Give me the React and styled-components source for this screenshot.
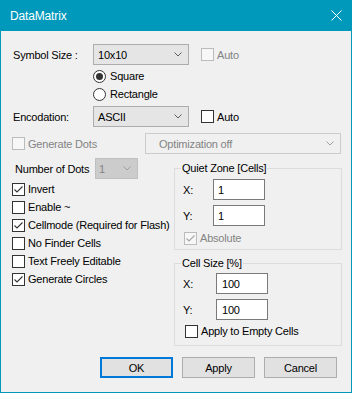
import React from 'react'
import styled, { createGlobalStyle } from 'styled-components'

const accent = '#0099bc'

const GlobalStyle = createGlobalStyle`
  html, body {
    margin: 0;
    padding: 0;
    background: #fff;
  }
  body {
    font-family: 'Liberation Sans', Arial, sans-serif;
    font-size: 11px;
    letter-spacing: -0.2px;
    color: #000;
  }
  * {
    box-sizing: border-box;
  }
`

const Window = styled.div`
  width: 352px;
  height: 393px;
  background: ${accent};
  padding: 0 1px 1px;
  display: flex;
  flex-direction: column;
`

const TitleBar = styled.div`
  height: 31px;
  flex: none;
  display: flex;
  align-items: center;
  justify-content: space-between;
  padding: 0 9px 0 9px;
  color: #fff;
  font-size: 12px;
  letter-spacing: -0.15px;
`

const Body = styled.div`
  flex: 1;
  background: #f0f0f0;
  padding: 13px 9px 0 11px;
  display: flex;
  flex-direction: column;
`

/* label | combo | extra, used by the top rows */
const FieldRow = styled.div`
  display: grid;
  grid-template-columns: ${p => p.$cols};
  align-items: center;
  height: 21px;
  margin-top: ${p => p.$top || 0}px;
`

const Label = styled.span`
  padding-left: ${p => p.$indent || 0}px;
  white-space: nowrap;
`

const RadioGroup = styled.div`
  margin: 2px 0 0 81px;
`

const ComboBox = styled.div`
  width: ${p => p.$width}px;
  height: 21px;
  display: flex;
  align-items: center;
  justify-content: space-between;
  padding: 0 6px 0 ${p => p.$pad || 4}px;
  border: 1px solid ${p => (p.$tone === 'dim' ? '#bfbfbf' : p.$tone === 'flat' ? '#cccccc' : '#adadad')};
  background: ${p => (p.$tone === 'dim' ? '#cccccc' : p.$tone === 'flat' ? '#f0f0f0' : '#e5e5e5')};
  color: ${p => (p.$tone ? '#838383' : '#000')};
  white-space: nowrap;
`

const Chevron = ({ color }) => (
  <svg width="8" height="5" viewBox="0 0 8 5">
    <polyline points="0.5,0.5 4,4 7.5,0.5" fill="none" stroke={color} strokeWidth="1" />
  </svg>
)

const Combo = ({ value, width, tone, pad }) => (
  <ComboBox $width={width} $tone={tone} $pad={pad}>
    <span>{value}</span>
    <Chevron color={tone ? '#a0a0a0' : '#606060'} />
  </ComboBox>
)

const Choice = styled.label`
  display: flex;
  align-items: center;
  gap: ${p => p.$gap || 3}px;
  height: 18px;
  margin-left: ${p => p.$indent || 0}px;
  color: ${p => (p.$disabled ? '#838383' : '#000')};
  white-space: nowrap;
`

const Box = styled.span`
  width: 13px;
  height: 13px;
  flex: none;
  display: flex;
  align-items: center;
  justify-content: center;
  border: 1px solid ${p => (p.$disabled ? '#bcbcbc' : '#333')};
  background: ${p => (p.$disabled ? '#f7f7f7' : '#fff')};
`

const Round = styled(Box)`
  border-radius: 50%;
  border-color: #333;

  &::after {
    content: '';
    width: 7px;
    height: 7px;
    border-radius: 50%;
    background: ${p => (p.$on ? '#333' : 'transparent')};
  }
`

const Check = ({ label, checked, disabled, indent }) => (
  <Choice $disabled={disabled} $indent={indent}>
    <Box $disabled={disabled}>
      {checked ? (
        <svg width="11" height="11" viewBox="0 0 11 11">
          <polyline
            points="1.5,5.5 4,8 9.5,2.5"
            fill="none"
            stroke={disabled ? '#a6a6a6' : '#333'}
            strokeWidth="1.1"
          />
        </svg>
      ) : null}
    </Box>
    {label}
  </Choice>
)

const Radio = ({ label, on }) => (
  <Choice $gap={4}>
    <Round $on={on} />
    {label}
  </Choice>
)

const Lower = styled.div`
  display: grid;
  grid-template-columns: 162px 168px;
  align-items: start;
  margin-top: 4px;
`

const CheckList = styled.div`
  display: flex;
  flex-direction: column;
  margin-top: 1px;
`

const Group = styled.fieldset`
  margin: ${p => p.$top || 0}px 0 0;
  padding: ${p => p.$pad};
  border: 1px solid #dcdcdc;
  min-width: 0;
`

const Legend = styled.legend`
  padding: 0 1px;
  margin-left: -2px;
  height: 20px;
  line-height: 20px;
`

const InputRow = styled.div`
  display: grid;
  grid-template-columns: ${p => p.$labelWidth}px 52px;
  align-items: center;
  height: 21px;
  margin-bottom: ${p => p.$after || 0}px;
`

const TextInput = styled.div`
  height: 21px;
  display: flex;
  align-items: center;
  padding-left: ${p => p.$pad || 4}px;
  border: 1px solid #7a7a7a;
  background: #fff;
`

const ButtonRow = styled.div`
  display: flex;
  justify-content: flex-end;
  gap: 9px;
  margin-top: 11px;
  padding-right: 5px;
`

const Button = styled.div`
  width: 73px;
  height: 21px;
  display: flex;
  align-items: center;
  justify-content: center;
  background: #e1e1e1;
  border: ${p => (p.$default ? '2px solid #0078d7' : '1px solid #adadad')};
`

const CloseIcon = () => (
  <svg width="11" height="11" viewBox="0 0 11 11">
    <path d="M0.5 0.5 L10.5 10.5 M10.5 0.5 L0.5 10.5" stroke="#fff" strokeWidth="1" />
  </svg>
)

export default function App() {
  return (
    <>
      <GlobalStyle />
      <Window>
        <TitleBar>
          <span>DataMatrix</span>
          <CloseIcon />
        </TitleBar>
        <Body>
          <FieldRow $cols="81px 96px auto">
            <Label $indent={1}>Symbol Size :</Label>
            <Combo value="10x10" width={96} />
            <Check label="Auto" disabled indent={12} />
          </FieldRow>
          <RadioGroup>
            <Radio label="Square" on />
            <Radio label="Rectangle" />
          </RadioGroup>
          <FieldRow $cols="81px 96px auto" $top={3}>
            <Label $indent={1}>Encodation:</Label>
            <Combo value="ASCII" width={96} />
            <Check label="Auto" indent={12} />
          </FieldRow>
          <FieldRow $cols="133px 196px" $top={6}>
            <Check label="Generate Dots" disabled />
            <Combo value="Optimization off" width={196} tone="flat" pad={13} />
          </FieldRow>
          <Lower>
            <div>
              <FieldRow $cols="83px 43px">
                <Label $indent={3}>Number of Dots</Label>
                <Combo value="1" width={43} tone="dim" pad={3} />
              </FieldRow>
              <CheckList>
                <Check label="Invert" checked />
                <Check label="Enable ~" />
                <Check label="Cellmode (Required for Flash)" checked />
                <Check label="No Finder Cells" />
                <Check label="Text Freely Editable" />
                <Check label="Generate Circles" checked />
              </CheckList>
            </div>
            <div>
              <Group $pad="1px 8px 2px">
                <Legend>Quiet Zone [Cells]</Legend>
                <InputRow $labelWidth={30} $after={5}>
                  <span>X:</span>
                  <TextInput>1</TextInput>
                </InputRow>
                <InputRow $labelWidth={30} $after={3}>
                  <span>Y:</span>
                  <TextInput>1</TextInput>
                </InputRow>
                <Check label="Absolute" checked disabled indent={1} />
              </Group>
              <Group $top={3} $pad="0 8px 5px">
                <Legend>Cell Size [%]</Legend>
                <InputRow $labelWidth={33} $after={5}>
                  <span>X:</span>
                  <TextInput $pad={5}>100</TextInput>
                </InputRow>
                <InputRow $labelWidth={33} $after={2}>
                  <span>Y:</span>
                  <TextInput $pad={5}>100</TextInput>
                </InputRow>
                <Check label="Apply to Empty Cells" indent={2} />
              </Group>
            </div>
          </Lower>
          <ButtonRow>
            <Button $default>OK</Button>
            <Button>Apply</Button>
            <Button>Cancel</Button>
          </ButtonRow>
        </Body>
      </Window>
    </>
  )
}
